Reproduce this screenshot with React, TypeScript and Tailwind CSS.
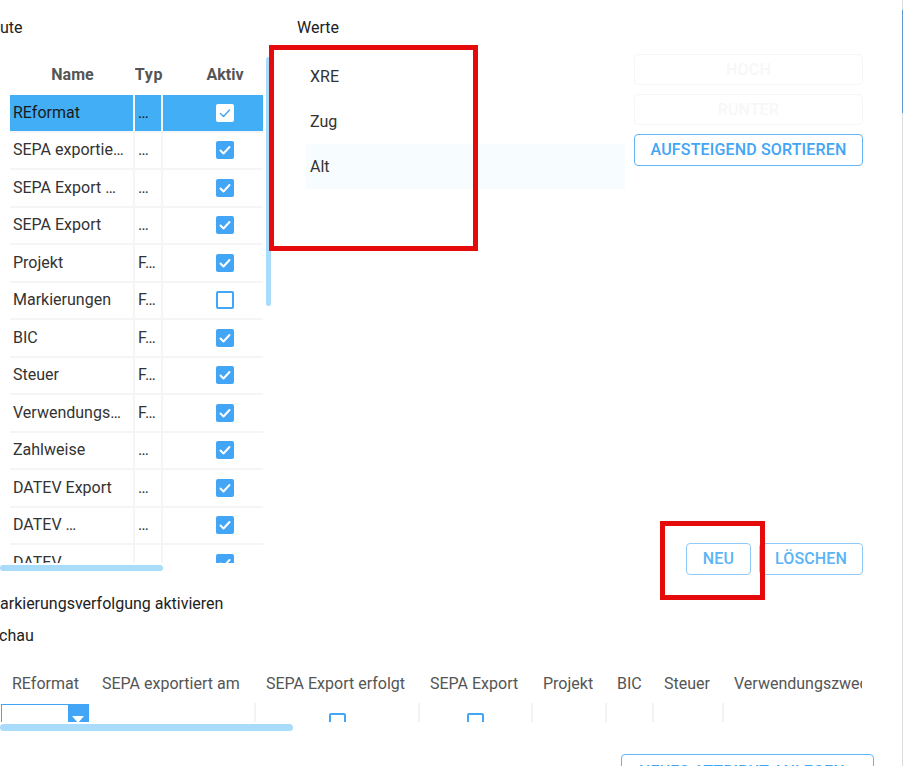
import React from "react";

const rows: { name: string; typ: string; checked: boolean; selected?: boolean }[] = [
  { name: "REformat", typ: "…", checked: true, selected: true },
  { name: "SEPA exportie…", typ: "…", checked: true },
  { name: "SEPA Export …", typ: "…", checked: true },
  { name: "SEPA Export", typ: "…", checked: true },
  { name: "Projekt", typ: "F…", checked: true },
  { name: "Markierungen", typ: "F…", checked: false },
  { name: "BIC", typ: "F…", checked: true },
  { name: "Steuer", typ: "F…", checked: true },
  { name: "Verwendungs…", typ: "F…", checked: true },
  { name: "Zahlweise", typ: "…", checked: true },
  { name: "DATEV Export", typ: "…", checked: true },
  { name: "DATEV …", typ: "…", checked: true },
  { name: "DATEV", typ: "…", checked: true },
];

function Check({ checked, inverted }: { checked: boolean; inverted?: boolean }) {
  if (!checked) {
    return <div className="w-[18px] h-[18px] rounded-[2px] border-2 border-[#42a5f5] bg-white" />;
  }
  return (
    <div
      className={
        inverted
          ? "w-[18px] h-[18px] rounded-[2px] bg-white flex items-center justify-center"
          : "w-[18px] h-[18px] rounded-[2px] bg-[#42a5f5] flex items-center justify-center"
      }
    >
      <svg width="14" height="14" viewBox="0 0 14 14">
        <polyline
          points="2.5,7.5 5.5,10.5 11.5,4"
          fill="none"
          stroke={inverted ? "#42a5f5" : "#ffffff"}
          strokeWidth={inverted ? 1.4 : 2}
          strokeLinecap="round"
          strokeLinejoin="round"
        />
      </svg>
    </div>
  );
}

const bottomCols = [
  { label: "REformat", w: "w-[90px]", border: false, content: "dropdown" },
  { label: "SEPA exportiert am", w: "w-[164px]", border: false, content: "" },
  { label: "SEPA Export erfolgt", w: "w-[164px]", border: true, content: "check" },
  { label: "SEPA Export", w: "w-[113px]", border: true, content: "check" },
  { label: "Projekt", w: "w-[74px]", border: true, content: "" },
  { label: "BIC", w: "w-[47px]", border: true, content: "" },
  { label: "Steuer", w: "w-[70px]", border: true, content: "" },
  { label: "Verwendungszweck", w: "w-[200px]", border: true, content: "" },
];

export default function App() {
  return (
    <div className="relative w-[903px] h-[766px] overflow-hidden bg-white font-['Roboto',sans-serif] text-[16px] text-[#333]">
      {/* top section */}
      <div className="flex items-start h-[580px]">
        {/* left column */}
        <div className="w-[297px] shrink-0 flex flex-col">
          <div className="mt-[18px] h-[20px] leading-[20px] text-[#222]">ute</div>
          <div className="mt-[16px] flex items-start">
            <div className="w-[263px] h-[509px] overflow-hidden pl-[10px]">
              <div className="w-[277px]">
                <div className="flex h-[41px] items-center font-bold text-[#555]">
                  <div className="w-[125px] flex justify-center">Name</div>
                  <div className="w-[28px] flex justify-center overflow-hidden whitespace-nowrap">
                    <span className="tracking-[0.04em]">Typ</span>
                  </div>
                  <div className="w-[124px] flex justify-center">Aktiv</div>
                </div>
                {rows.map((r, i) => (
                  <div
                    key={i}
                    className={
                      r.selected
                        ? "flex h-[37.5px] border-b-2 border-[#f5f5f5] bg-[#42aef5] text-[#1a1a1a]"
                        : "flex h-[37.5px] border-b-2 border-[#f5f5f5]"
                    }
                  >
                    <div className="w-[125px] border-r-2 border-[#f5f5f5] pl-[3px] flex items-center whitespace-nowrap overflow-hidden">
                      {r.name}
                    </div>
                    <div className="w-[28px] border-r-2 border-[#f5f5f5] pl-[3px] flex items-center whitespace-nowrap overflow-hidden">
                      {r.typ}
                    </div>
                    <div className="w-[124px] flex items-center justify-center">
                      <Check checked={r.checked} inverted={r.selected} />
                    </div>
                  </div>
                ))}
              </div>
            </div>
            <div className="ml-[3px] mt-[3px] w-[5px] h-[249px] rounded-full bg-[#a9dcfb]" />
          </div>
          <div className="mt-[2px] w-[163px] h-[6px] rounded-full bg-[#a9dcfb]" />
        </div>

        {/* middle column */}
        <div className="w-[337px] shrink-0 flex flex-col">
          <div className="mt-[18px] h-[20px] leading-[20px] text-[#222]">Werte</div>
          <div className="mt-[16px] ml-[9px] w-[319px] flex flex-col">
            <div className="h-[45px] pl-[4px] flex items-center">XRE</div>
            <div className="h-[45px] pl-[4px] flex items-center">Zug</div>
            <div className="h-[45px] pl-[4px] flex items-center bg-[#f7fdff]">Alt</div>
          </div>
        </div>

        {/* right column */}
        <div className="w-[229px] shrink-0 flex flex-col">
          <div className="mt-[54px] flex flex-col gap-[9px]">
            <div className="h-[31px] rounded-[4px] border border-[#f6f6f6] flex items-center justify-center font-medium text-[#f7f7f7] tracking-[0.01em]">
              HOCH
            </div>
            <div className="h-[31px] rounded-[4px] border border-[#f6f6f6] flex items-center justify-center font-medium text-[#f7f7f7] tracking-[0.01em]">
              RUNTER
            </div>
            <div className="h-[32px] rounded-[4px] border border-[#64b5f6] flex items-center justify-center font-medium text-[#42a5f5] tracking-[0.01em]">
              AUFSTEIGEND SORTIEREN
            </div>
          </div>
          <div className="mt-[377px] flex justify-end gap-[8px]">
            <div className="w-[65px] h-[32px] rounded-[4px] border border-[#90caf9] flex items-center justify-center font-medium text-[#5ab4f5] tracking-[0.01em]">
              NEU
            </div>
            <div className="w-[104px] h-[32px] rounded-[4px] border border-[#90caf9] flex items-center justify-center font-medium text-[#5ab4f5] tracking-[0.01em]">
              LÖSCHEN
            </div>
          </div>
        </div>
      </div>

      {/* bottom section */}
      <div className="flex flex-col">
        <div className="mt-[14px] h-[20px] leading-[20px] text-[#222] whitespace-nowrap">arkierungsverfolgung aktivieren</div>
        <div className="mt-[12px] h-[20px] leading-[20px] text-[#222] overflow-hidden">
          <span className="block -ml-[1px]">chau</span>
        </div>
        <div className="mt-[18px] w-[862px] overflow-hidden">
          <div className="flex w-[1100px] h-[39px] items-center text-[#555]">
            {bottomCols.map((c, i) => (
              <div key={i} className={`${c.w} shrink-0 pl-[12px] whitespace-nowrap`}>
                {c.label}
              </div>
            ))}
          </div>
          <div className="flex w-[1100px] h-[19px] overflow-hidden">
            {bottomCols.map((c, i) => (
              <div
                key={i}
                className={
                  c.border
                    ? `${c.w} shrink-0 border-l-2 border-[#f3f3f3] flex justify-center`
                    : `${c.w} shrink-0 flex`
                }
              >
                {c.content === "dropdown" && (
                  <div className="ml-[1px] mt-[1px] w-[88px] h-[22px] border border-[#42a5f5] flex justify-end">
                    <div className="w-[20px] h-full bg-[#42a5f5] flex items-end justify-center pb-[2px]">
                      <svg width="12" height="7" viewBox="0 0 12 7">
                        <polygon points="0,0 12,0 6,7" fill="#ffffff" />
                      </svg>
                    </div>
                  </div>
                )}
                {c.content === "check" && (
                  <div className="mt-[10px] w-[17px] h-[17px] rounded-[2px] border-2 border-[#42a5f5]" />
                )}
              </div>
            ))}
          </div>
        </div>
        <div className="mt-[2px] w-[293px] h-[7px] rounded-full bg-[#a9dcfb]" />
        <div className="mt-[23px] ml-[621px] w-[253px] h-[34px] rounded-[4px] border border-[#64b5f6] pl-[17px] pt-[5px] font-medium text-[#42a5f5] tracking-[0.01em] whitespace-nowrap">
          NEUES ATTRIBUT ANLEGEN
        </div>
      </div>

      {/* red highlight boxes */}
      <div className="absolute left-[269px] top-[45px] w-[209px] h-[206px] border-[5px] border-[#e60b0b]" />
      <div className="absolute left-[660px] top-[521px] w-[105px] h-[79px] border-[5px] border-[#e60b0b]" />

      {/* window scrollbar edge */}
      <div className="absolute right-0 top-0 w-[1px] h-full bg-[#dcdcdc]">
        <div className="mt-[10px] h-[103px] w-full bg-[#5b9bd5]" />
      </div>
    </div>
  );
}
